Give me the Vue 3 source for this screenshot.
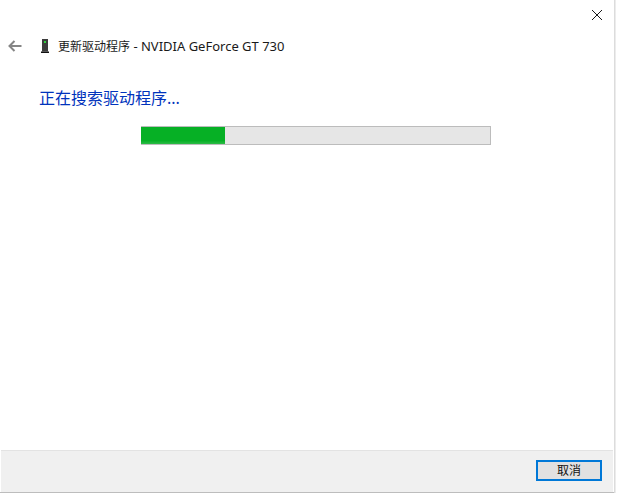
<script setup>
const progress = 24
</script>

<template>
  <div class="window">
    <div class="dialog">
      <div class="close-row">
        <svg class="close" width="12" height="12" viewBox="0 0 12 12">
          <path d="M1 1L11 11M11 1L1 11" stroke="#1a1a1a" stroke-width="1" fill="none" />
        </svg>
      </div>
      <div class="title-row">
        <svg class="back" width="14" height="12" viewBox="0 0 14 12">
          <path d="M6.5 1L1.5 6L6.5 11M1.5 6H13.5" stroke="#858585" stroke-width="2" fill="none" />
        </svg>
        <svg class="device" width="8" height="14" viewBox="0 0 8 14">
          <rect x="1" y="0" width="6" height="12.5" fill="#3c3c3c" />
          <rect x="0" y="12.5" width="8" height="1.5" fill="#111" />
          <rect x="3" y="2" width="2" height="2" fill="#2fd13c" />
        </svg>
        <span class="title">更新驱动程序<span class="latin"> - NVIDIA GeForce GT 730</span></span>
      </div>
      <h1 class="heading">正在搜索驱动程序...</h1>
      <div class="progress-wrap">
        <div class="progress">
          <div class="bar" :style="{ width: progress + '%' }"></div>
        </div>
      </div>
      <div class="spacer"></div>
      <div class="footer">
        <button class="cancel">取消</button>
      </div>
    </div>
    <div class="bottom-strip"></div>
  </div>
</template>

<style scoped>
.window {
  width: 617px;
  height: 496px;
  display: flex;
  flex-direction: column;
  background: #fff;
  font-family: "Noto Sans", "Noto Sans CJK SC", sans-serif;
  overflow: hidden;
}
.dialog {
  width: 614px;
  height: 493px;
  flex: none;
  box-sizing: border-box;
  display: flex;
  flex-direction: column;
  padding-right: 1px;
  border-bottom: 1px solid #bdbdbd;
  box-shadow: 1px 0 0 #dcdcdc, 2px 0 0 #ececec;
}
.close-row {
  height: 9px;
  flex: none;
  display: flex;
  justify-content: flex-end;
  padding-right: 10px;
}
.close {
  margin-top: 9px;
  flex: none;
}
.title-row {
  margin-top: 28px;
  height: 18px;
  flex: none;
  display: flex;
  align-items: center;
  padding-left: 8px;
}
.back {
  flex: none;
}
.device {
  flex: none;
  margin-left: 19px;
}
.title {
  margin-left: 9px;
  font-size: 12px;
  line-height: 18px;
  color: #1a1a1a;
  white-space: nowrap;
}
.latin {
  font-size: 13px;
}
.heading {
  margin: 32px 0 0 39px;
  font-size: 16px;
  line-height: 22px;
  font-weight: 400;
  color: #0033bc;
  white-space: nowrap;
}
.progress-wrap {
  margin-top: 17px;
  padding-left: 141px;
  flex: none;
}
.progress {
  width: 350px;
  height: 19px;
  box-sizing: border-box;
  border: 1px solid #bcbcbc;
  border-left: 0;
  background: #e6e6e6;
}
.bar {
  height: 100%;
  background: linear-gradient(to bottom, #06b025 0, #06b025 80%, #2dbb47 100%);
}
.spacer {
  flex: 1;
}
.footer {
  height: 42px;
  box-sizing: border-box;
  flex: none;
  margin-left: 1px;
  background: #f0f0f0;
  border-top: 1px solid #e3e3e3;
  display: flex;
  justify-content: flex-end;
  align-items: flex-start;
  padding: 9px 11px 0 0;
}
.cancel {
  width: 66px;
  height: 21px;
  box-sizing: border-box;
  padding: 0;
  border: 2px solid #0078d7;
  background: #e1e1e1;
  font-family: inherit;
  font-size: 12px;
  line-height: 16px;
  color: #111;
}
.bottom-strip {
  flex: 1;
  background: #fff;
}
</style>
